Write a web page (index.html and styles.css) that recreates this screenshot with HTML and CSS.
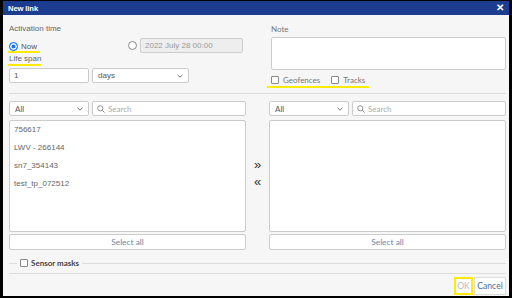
FILE: index.html
```html
<!DOCTYPE html>
<html lang="en">
<head>
<meta charset="UTF-8">
<title>New link</title>
<link rel="stylesheet" href="styles.css">
</head>
<body>
<div class="dialog">
  <div class="titlebar">
    <span class="title">New link</span>
    <span class="close">✕</span>
  </div>

  <div class="content">
    <div class="top">
      <div class="col-left">
        <div class="label">Activation time</div>
        <div class="time-row">
          <span class="mark"><span class="radio checked"></span><span class="rlabel">Now</span></span>
          <span class="radio second"></span>
          <span class="input date">2022 July 28 00:00</span>
        </div>
        <div class="label"><span class="mark mark-text">Life span</span></div>
        <div class="span-row">
          <span class="input num">1</span>
          <span class="select days">days <svg class="chev" width="6" height="4" viewBox="0 0 6 4"><path d="M0.5 0.8 L3 3.2 L5.5 0.8" fill="none" stroke="#666" stroke-width="0.9"/></svg></span>
        </div>
      </div>
      <div class="col-right">
        <div class="label lato">Note</div>
        <div class="textarea"></div>
        <div class="checks">
          <span class="mark checks-mark">
            <span class="check"><span class="box"></span>Geofences</span>
            <span class="check"><span class="box"></span>Tracks</span>
          </span>
        </div>
      </div>
    </div>

    <div class="sep"></div>

    <div class="lists">
      <div class="pane">
        <div class="filter">
          <span class="select all">All <svg class="chev" width="6" height="4" viewBox="0 0 6 4"><path d="M0.5 0.8 L3 3.2 L5.5 0.8" fill="none" stroke="#666" stroke-width="0.9"/></svg></span>
          <span class="input search"><svg width="8" height="8" viewBox="0 0 8 8"><circle cx="3.3" cy="3.3" r="2.6" fill="none" stroke="#777" stroke-width="0.8"/><path d="M5.2 5.2 L7.5 7.5" stroke="#777" stroke-width="0.9"/></svg>Search</span>
        </div>
        <div class="listbox">
          <div class="item">756617</div>
          <div class="item">LWV - 266144</div>
          <div class="item">sn7_354143</div>
          <div class="item">test_tp_072512</div>
        </div>
        <div class="btn-all">Select all</div>
      </div>

      <div class="mover">
        <span>»</span>
        <span>«</span>
      </div>

      <div class="pane">
        <div class="filter">
          <span class="select all">All <svg class="chev" width="6" height="4" viewBox="0 0 6 4"><path d="M0.5 0.8 L3 3.2 L5.5 0.8" fill="none" stroke="#666" stroke-width="0.9"/></svg></span>
          <span class="input search"><svg width="8" height="8" viewBox="0 0 8 8"><circle cx="3.3" cy="3.3" r="2.6" fill="none" stroke="#777" stroke-width="0.8"/><path d="M5.2 5.2 L7.5 7.5" stroke="#777" stroke-width="0.9"/></svg>Search</span>
        </div>
        <div class="listbox"></div>
        <div class="btn-all">Select all</div>
      </div>
    </div>

    <fieldset class="masks">
      <legend><span class="box"></span>Sensor masks</legend>
    </fieldset>
  </div>

  <div class="footer">
    <span class="fbtn ok">OK</span>
    <span class="fbtn cancel">Cancel</span>
  </div>
</div>
</body>
</html>
```

FILE: styles.css
```css
*, *::before, *::after { box-sizing: border-box; margin: 0; padding: 0; }
body {
  background: #000;
  font-family: 'Liberation Sans', Arial, sans-serif;
  font-size: 8px;
  color: #666;
}
.dialog {
  width: 506px;
  height: 295px;
  margin: 1px 3px 0 3px;
  background: #f6f6f6;
  display: flex;
  flex-direction: column;
}

.titlebar {
  height: 14px;
  background: #1c3d8f;
  display: flex;
  align-items: center;
  justify-content: space-between;
  padding: 0 5px 0 5px;
}
.title { color: #fff; font-weight: 700; font-size: 7.6px; letter-spacing: -0.1px; }
.close { color: #fff; font-size: 10px; font-weight: 700; line-height: 1; }

.content { flex: 1; padding: 8px 3px 0 6px; }

.top { display: flex; gap: 22px; }
.col-left { width: 240px; }
.col-right { flex: 1; }
.label { height: 12px; line-height: 12px; }
.lato { font-family: Lato, sans-serif; color: #777; }

.mark { border-bottom: 2px solid #ffec00; }
.time-row { display: flex; align-items: center; height: 15px; margin-top: 3px; }
.time-row .mark { display: flex; align-items: center; height: 12px; padding: 0 3px 0 0; margin-left: -1px; margin-top: 3px; }
.radio {
  width: 9px; height: 9px;
  border: 1px solid #888;
  border-radius: 50%;
  background: #fff;
  display: inline-block;
  margin-left: 1px;
}
.radio.checked { border-color: #1a73e8; background: #1a73e8; box-shadow: inset 0 0 0 1.5px #fff; }
.rlabel { margin-left: 3px; color: #555; }
.radio.second { margin-left: 88px; }
.input {
  background: #fff;
  border: 1px solid #ccc;
  border-radius: 2px;
  height: 15px;
  display: flex;
  align-items: center;
  padding-left: 4px;
  color: #555;
}
.date { width: 103px; margin-left: 3px; background: #eee; color: #999; }
.mark-text { padding-bottom: 0; display: inline-block; line-height: 10px; margin-left: -1px; padding-left: 1px; }
.span-row { display: flex; gap: 3px; margin-top: 3px; }
.num { width: 80px; }
.select {
  background: #fff;
  border: 1px solid #ccc;
  border-radius: 2px;
  height: 15px;
  display: flex;
  align-items: center;
  justify-content: space-between;
  padding: 0 5px 0 5px;
  color: #555;
}
.days { width: 97px; }
.chev { flex-shrink: 0; }

.textarea {
  height: 33px;
  margin-top: 2px;
  background: #fff;
  border: 1px solid #ccc;
  border-radius: 2px;
}
.checks { margin-top: 5px; height: 13px; }
.checks-mark {
  display: inline-flex;
  gap: 11px;
  margin-left: -4px;
  padding: 0 4px 1px 4px;
  font-family: Lato, sans-serif;
  color: #777;
}
.check { display: flex; align-items: center; gap: 4px; }
.box {
  width: 8px; height: 8px;
  border: 1px solid #888;
  border-radius: 1px;
  background: #fff;
  display: inline-block;
}

.sep { height: 1px; background: #dcdcdc; margin-top: 5px; }

.lists { display: flex; margin-top: 7px; }
.pane { width: 237px; display: flex; flex-direction: column; }
.filter { display: flex; gap: 3px; height: 15px; font-family: Lato, sans-serif; }
.all { width: 80px; }
.search { flex: 1; color: #aaa; gap: 3px; }
.listbox {
  height: 112px;
  margin-top: 4px;
  background: #fff;
  border: 1px solid #ccc;
  border-radius: 2px;
  padding: 4px 0 0 4px;
}
.item { height: 18px; line-height: 10px; color: #666; }
.btn-all {
  height: 16px;
  margin-top: 2px;
  background: #fff;
  border: 1px solid #ccc;
  border-radius: 2px;
  display: flex;
  align-items: center;
  justify-content: center;
  font-family: Lato, sans-serif;
  font-size: 8.4px;
  color: #6a88a8;
}
.mover {
  width: 23px;
  display: flex;
  flex-direction: column;
  align-items: center;
  justify-content: center;
  gap: 4px;
  padding-bottom: 6px;
  font-size: 13px;
  line-height: 13px;
  color: #333;
}

.masks {
  margin-top: 8px;
  height: 16px;
  border: none;
  border-top: 1px solid #ddd;
  border-bottom: 1px solid #ddd;
  padding: 0 8px;
}
.masks legend {
  display: flex;
  align-items: center;
  gap: 3px;
  padding: 0 3px;
  margin-left: 0;
  font-family: Lato, sans-serif;
  font-weight: 700;
  color: #444;
  font-size: 8px;
}

.footer {
  display: flex;
  justify-content: flex-end;
  gap: 1px;
  padding: 0 3px 1px 0;
  height: 19px;
  align-items: stretch;
}
.fbtn {
  display: flex;
  align-items: center;
  justify-content: center;
  font-family: Lato, sans-serif;
  font-size: 8.6px;
  background: #fff;
  border: 1px solid #ddd;
}
.ok { width: 19px; color: #bbb; border: 2px solid #ffec00; }
.cancel { width: 32px; color: #4a6f98; }
```
